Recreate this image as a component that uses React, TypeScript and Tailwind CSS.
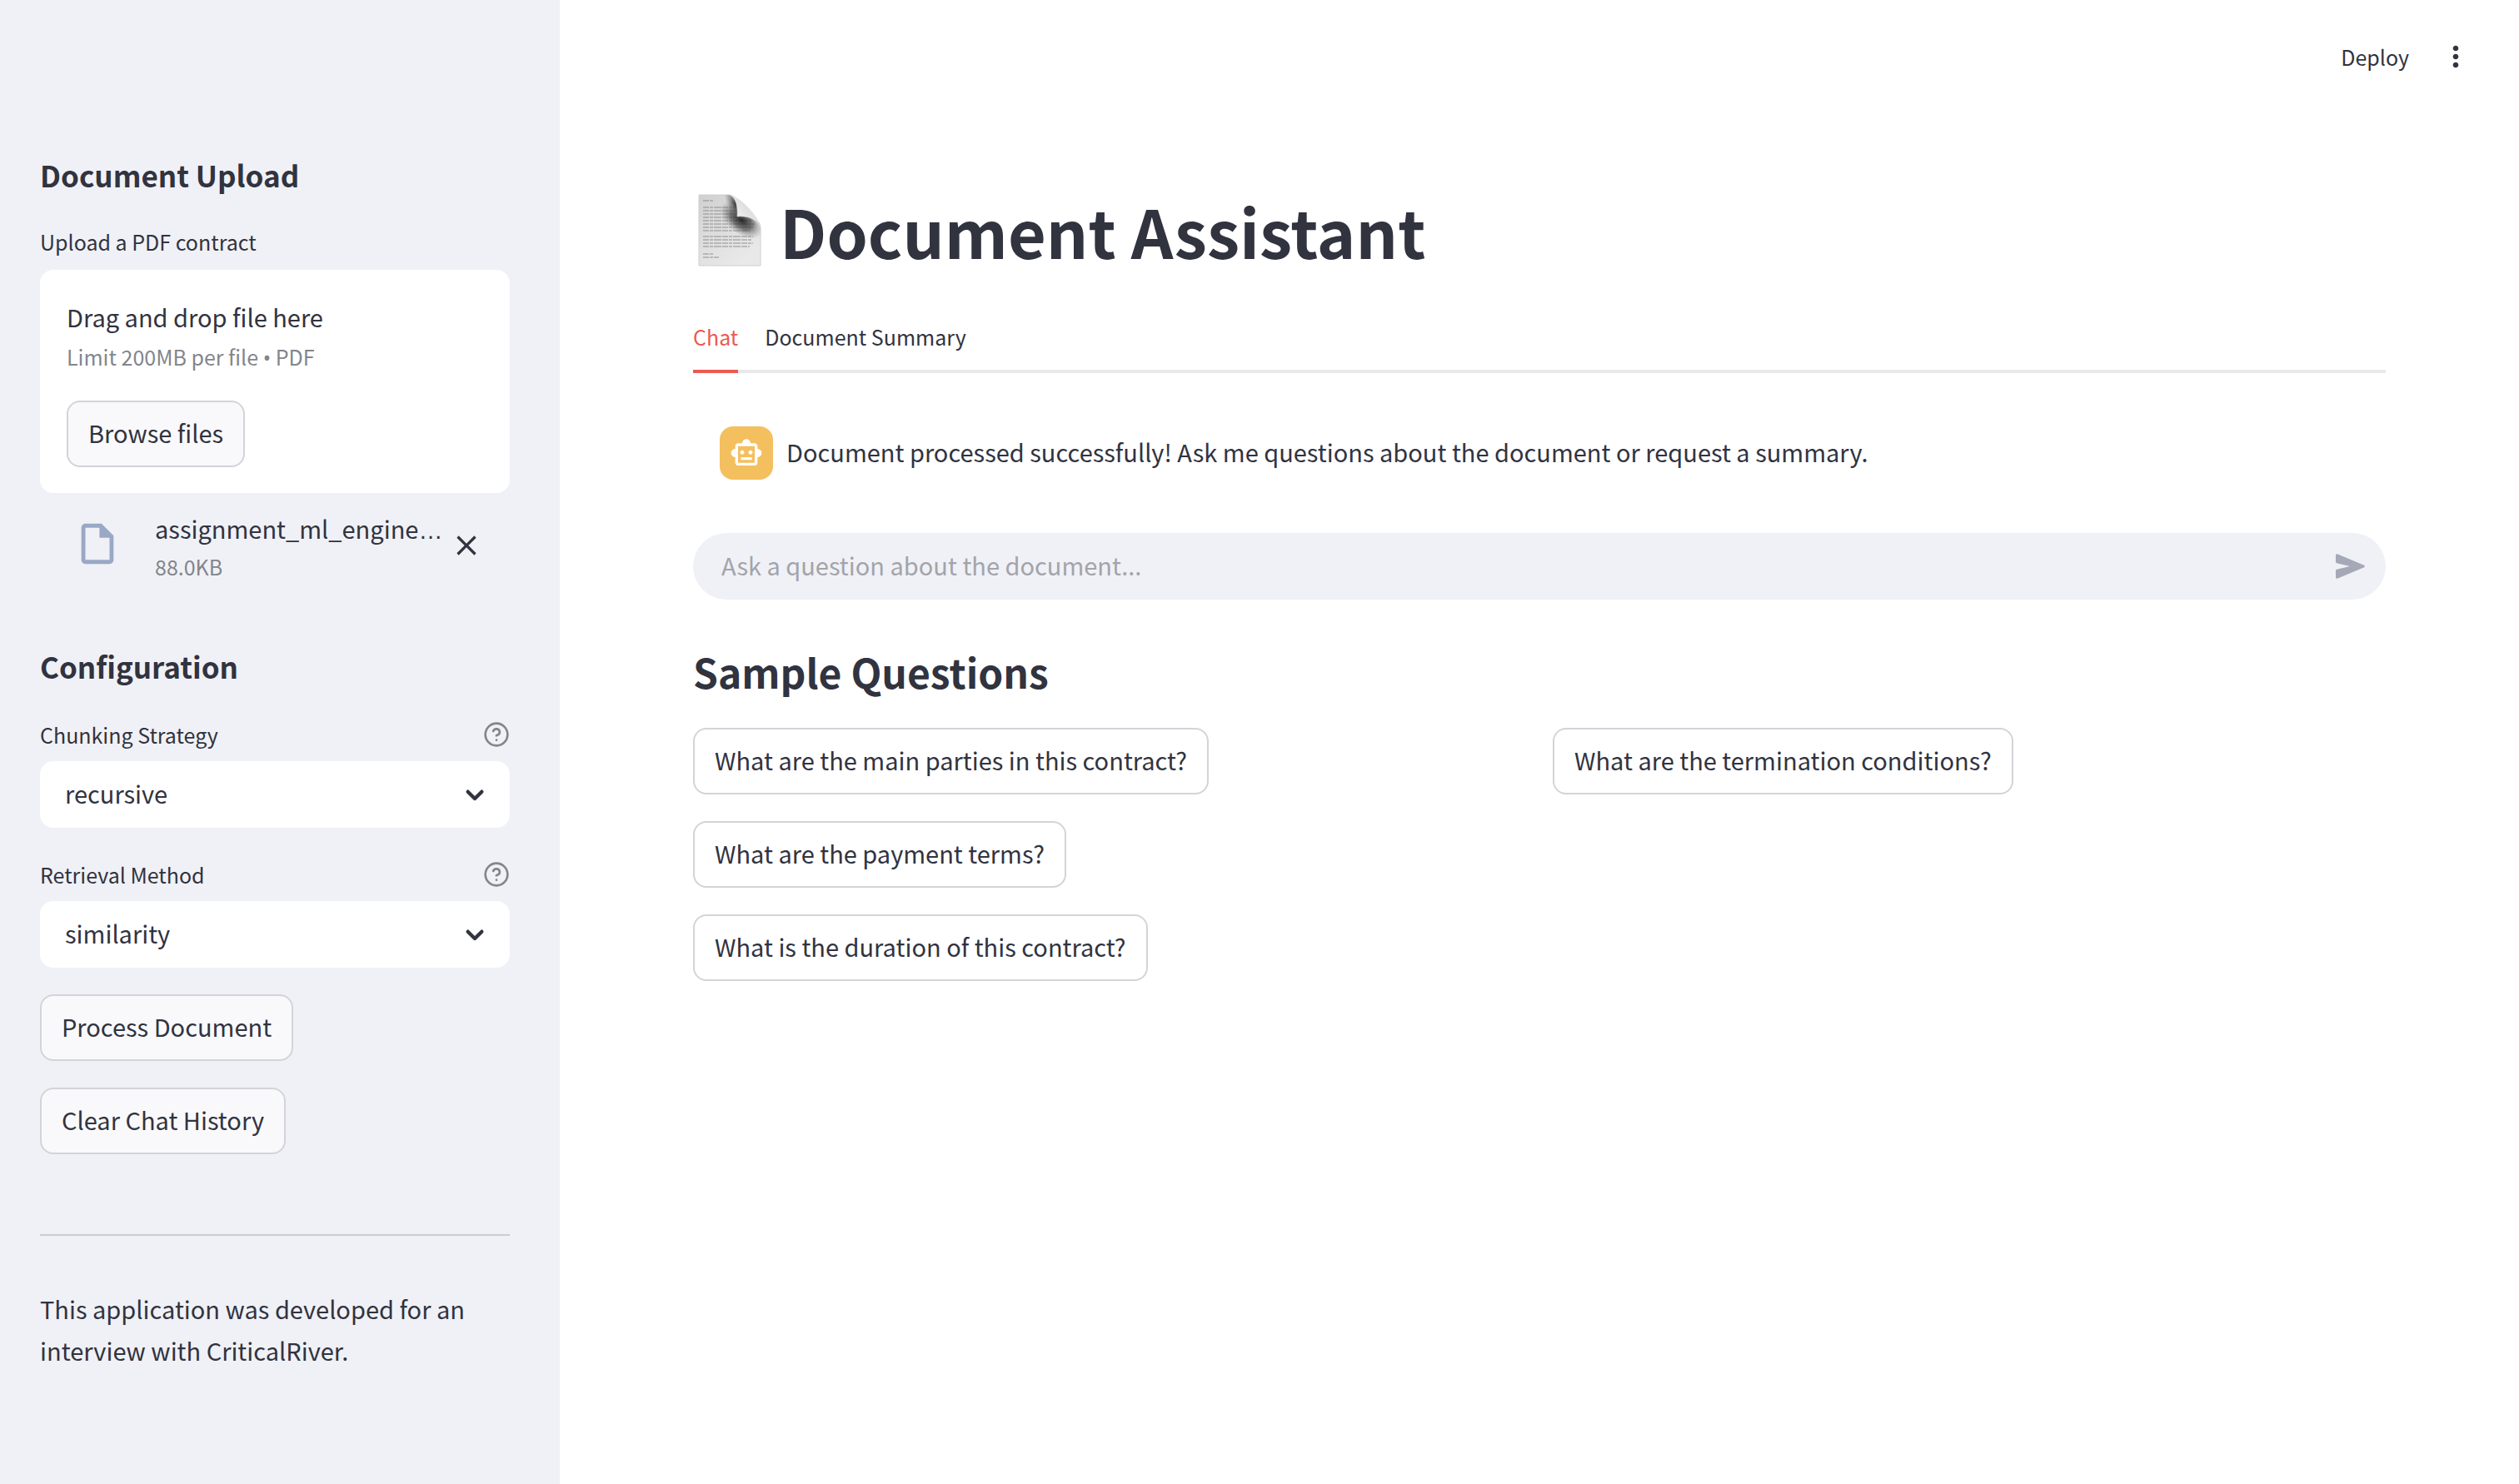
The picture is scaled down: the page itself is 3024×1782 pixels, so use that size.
import type { ReactNode } from "react";
import { FiHelpCircle } from "react-icons/fi";
import {
  MdClose,
  MdMoreVert,
  MdOutlineInsertDriveFile,
  MdOutlineSmartToy,
} from "react-icons/md";

const samples = [
  ["What are the main parties in this contract?", "What are the payment terms?", "What is the duration of this contract?"],
  ["What are the termination conditions?"],
];

function Button({ children, tone = "bg-white" }: { children: ReactNode; tone?: string }) {
  return (
    <button
      type="button"
      className={`h-20 self-start whitespace-nowrap rounded-2xl border-2 border-[#d3d4d8] px-6 pb-1 text-[29px] leading-[46px] ${tone}`}
    >
      {children}
    </button>
  );
}

function SelectField({ id, label, value }: { id: string; label: string; value: string }) {
  return (
    <div className="flex flex-col">
      <div className="flex h-12 items-center justify-between">
        <label htmlFor={id} className="text-[25px] leading-10">
          {label}
        </label>
        <button type="button" aria-label={`Help for ${label}`} className="text-[#83858c]">
          <FiHelpCircle className="size-8" />
        </button>
      </div>
      <div className="relative mt-2 flex">
        <select
          id={id}
          defaultValue={value}
          className="h-20 w-full appearance-none rounded-2xl bg-white px-[30px] pb-1 text-[29px] leading-[46px]"
        >
          <option>{value}</option>
        </select>
        <svg viewBox="0 0 24 24" className="pointer-events-none absolute top-5 right-[22px] size-10" fill="none" aria-hidden="true">
          <path d="M7 10l5 5 5-5" stroke="currentColor" strokeWidth="2.6" strokeLinecap="round" strokeLinejoin="round" />
        </svg>
      </div>
    </div>
  );
}

function PageIcon() {
  const lines = [
    [8, 12], [16, 40], [20, 40], [24, 42], [28, 46], [32, 58], [36, 62], [40, 60], [44, 56],
    [51, 60], [55, 58], [59, 60], [63, 56], [72, 12], [76, 19],
  ];
  return (
    <svg viewBox="0 0 76 88" className="ml-[6px] h-[88px] w-[76px] shrink-0" aria-hidden="true">
      <defs>
        <linearGradient id="sheet" x1="0" y1="0" x2="0.6" y2="1">
          <stop offset="0" stopColor="#d0d0d0" />
          <stop offset="1" stopColor="#e9e9e9" />
        </linearGradient>
        <radialGradient id="shade" gradientUnits="userSpaceOnUse" cx="0" cy="0" r="1" gradientTransform="translate(52 31) rotate(38) scale(30 17)">
          <stop offset="0" stopColor="#1c1c1c" stopOpacity="0.95" />
          <stop offset="0.5" stopColor="#3c3c3c" stopOpacity="0.65" />
          <stop offset="1" stopColor="#888" stopOpacity="0" />
        </radialGradient>
        <radialGradient id="edge" gradientUnits="userSpaceOnUse" cx="0" cy="0" r="1" gradientTransform="translate(45 12) rotate(62) scale(22 10)">
          <stop offset="0" stopColor="#222" stopOpacity="0.9" />
          <stop offset="1" stopColor="#777" stopOpacity="0" />
        </radialGradient>
        <linearGradient id="fold" x1="0" y1="1" x2="0.6" y2="0.4">
          <stop offset="0" stopColor="#ffffff" />
          <stop offset="1" stopColor="#dedede" />
        </linearGradient>
      </defs>
      <path d="M1 1H36C44 1 48 8 48 20L70 31C74 34 75 38 75 42V86H1Z" fill="url(#sheet)" stroke="#cfcfcf" />
      {lines.map(([y, w]) => (
        <path key={y} d={`M6 ${y}h${w}`} stroke="#888" strokeWidth="1.4" strokeDasharray="7 1 4 1 9 1" opacity="0.6" />
      ))}
      <path d="M1 1H36C44 1 48 8 48 20L70 31C74 34 75 38 75 42V86H1Z" fill="url(#shade)" />
      <path d="M1 1H36C44 1 48 8 48 20L70 31C74 34 75 38 75 42V86H1Z" fill="url(#edge)" />
      <path d="M38 1C45 4 48 14 47 27C58 26 69 29 74 38C72 27 52 5 38 1Z" fill="url(#fold)" stroke="#d8d8d8" strokeWidth="0.6" />
    </svg>
  );
}

export default function App() {
  return (
    <div className="flex min-h-screen bg-white font-['Noto_Sans_CJK_SC','Noto_Sans',sans-serif] text-[#31333f]">
      <aside className="flex w-[672px] shrink-0 flex-col bg-[#f0f1f6] pt-[186px] pr-[60px] pl-12">
        <h2 className="text-[35px] leading-[48px] font-bold">Document Upload</h2>
        <label htmlFor="upload" className="mt-9 text-[25px] leading-10">
          Upload a PDF contract
        </label>
        <section className="mt-[14px] flex h-[268px] flex-col rounded-2xl bg-white p-8">
          <p className="text-[29px] leading-[48px]">Drag and drop file here</p>
          <p className="mt-1 text-[25px] leading-10 text-[#83858c]">
            Limit 200MB per file <span className="font-['Noto_Sans']">•</span> PDF
          </p>
          <input id="upload" type="file" accept="application/pdf" className="hidden" />
          <div className="mt-8 flex">
            <Button tone="bg-[#f9f9fb]">Browse files</Button>
          </div>
        </section>
        <div className="mt-[18px] flex h-[90px] items-center px-8">
          <MdOutlineInsertDriveFile className="mb-1 ml-2 size-[58px] shrink-0 text-[#9aa8c6]" />
          <div className="ml-10 flex-1">
            <p className="text-[29px] leading-[46px] whitespace-nowrap">
              assignment_ml_engine<span className="font-['Liberation_Sans']">…</span>
            </p>
            <p className="text-[25px] leading-10 text-[#83858c]">88.0KB</p>
          </div>
          <button type="button" aria-label="Remove file">
            <MdClose className="size-10" />
          </button>
        </div>

        <h2 className="mt-[76px] text-[35px] leading-[48px] font-bold">Configuration</h2>
        <div className="mt-[34px] flex flex-col gap-8">
          <SelectField id="chunking" label="Chunking Strategy" value="recursive" />
          <SelectField id="retrieval" label="Retrieval Method" value="similarity" />
          <Button tone="bg-[#f9f9fb]">Process Document</Button>
          <Button tone="bg-[#f9f9fb]">Clear Chat History</Button>
        </div>
        <hr className="mt-24 border-t-2 border-[#caccd2]" />
        <p className="mt-[62px] text-[29px] leading-[50px]">
          This application was developed for an interview with CriticalRiver.
        </p>
      </aside>

      <div className="flex min-w-0 flex-1 flex-col">
        <header className="flex h-[136px] items-center justify-end gap-9 pr-14">
          <button type="button" className="text-[25px] leading-10">
            Deploy
          </button>
          <button type="button" aria-label="Main menu">
            <MdMoreVert className="size-10" />
          </button>
        </header>

        <main className="flex flex-col px-40 pt-[88px]">
          <h1 className="flex items-center gap-[22px] text-[79px] leading-[106px] font-bold">
            <PageIcon />
            Document Assistant
          </h1>
          <div role="tablist" className="mt-[38px] flex h-20 gap-8 border-b-4 border-[#e9e9eb] text-[25px] leading-10">
            <button type="button" role="tab" aria-selected="true" className="-mb-1 border-b-4 border-[#ea5b53] pb-1 text-[#ea5b53]">
              Chat
            </button>
            <button type="button" role="tab" aria-selected="false" className="pb-1">
              Document Summary
            </button>
          </div>

          <div className="mt-16 flex items-center gap-4 px-8">
            <div className="flex size-16 shrink-0 items-center justify-center rounded-2xl bg-[#f4bf5f] text-white">
              <MdOutlineSmartToy className="size-10" />
            </div>
            <p className="pb-1 text-[29px] leading-[50px]">
              Document processed successfully! Ask me questions about the document or request a summary.
            </p>
          </div>

          <form className="mt-16 flex h-20 items-center rounded-full bg-[#f0f1f6] pr-6 pl-[34px]">
            <input
              type="text"
              aria-label="Ask a question about the document"
              placeholder="Ask a question about the document..."
              className="h-full min-w-0 flex-1 bg-transparent pb-1 text-[29px] outline-none placeholder:text-[#a3a4aa]"
            />
            <button type="button" aria-label="Send" className="text-[#a5a8b6]">
              <svg viewBox="0 0 36 30" className="h-[30px] w-9" fill="currentColor" aria-hidden="true">
                <path d="M0 2C0 .5 1-.2 2.5.4L33.5 13.4C35.4 14.2 35.4 15.8 33.5 16.6L2.5 29.6C1 30.2 0 29.5 0 28V21C0 19.5.7 18.9 2 18.6L17 15 2 11.4C.7 11.1 0 10.5 0 9Z" />
              </svg>
            </button>
          </form>

          <h3 className="mt-[52px] text-[48px] leading-[68px] font-bold">Sample Questions</h3>
          <div className="mt-[34px] grid grid-cols-2 gap-8">
            {samples.map((column) => (
              <div key={column[0]} className="flex flex-col gap-8">
                {column.map((question) => (
                  <Button key={question}>{question}</Button>
                ))}
              </div>
            ))}
          </div>
        </main>
      </div>
    </div>
  );
}
